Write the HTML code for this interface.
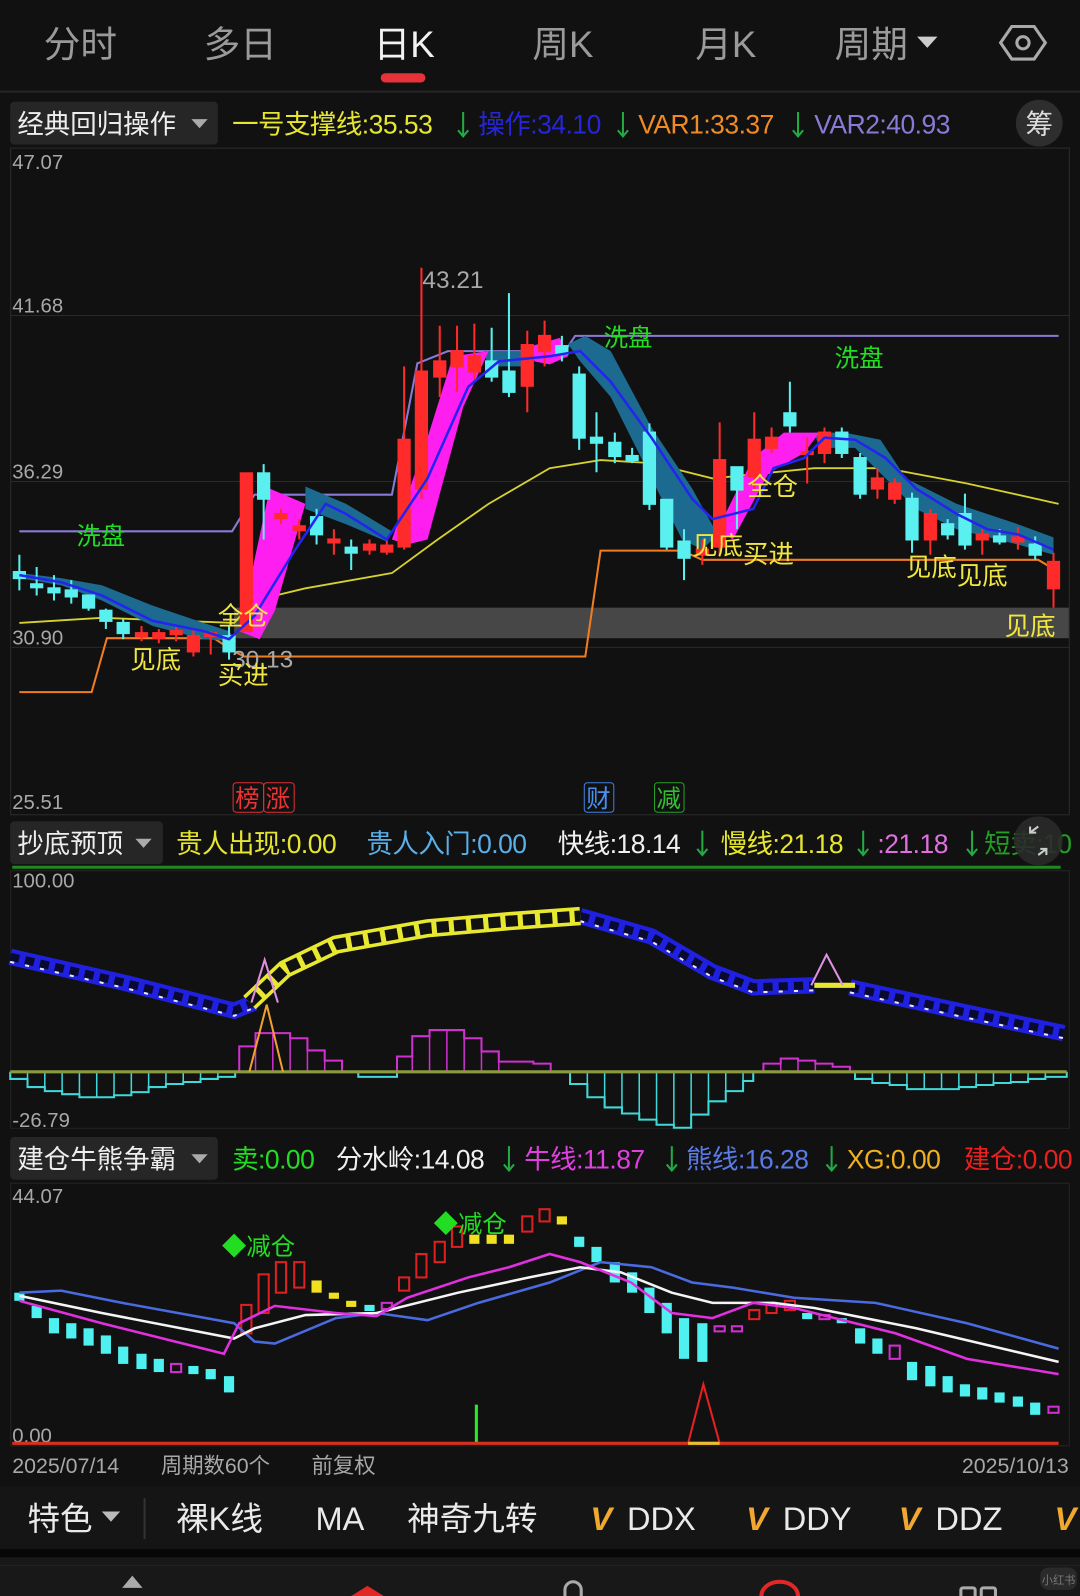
<!DOCTYPE html>
<html><head><meta charset="utf-8"><style>
html,body{margin:0;padding:0;background:#111;}
svg{display:block}
text{font-family:"Liberation Sans","Noto Sans CJK SC",sans-serif;}
</style></head><body>
<svg width="1080" height="1596" viewBox="0 0 1061 1568" xmlns="http://www.w3.org/2000/svg">
<rect width="1061" height="1568" fill="#111"/>
<g font-size="36" fill="#9a9a9a" text-anchor="middle">
<text x="79" y="56">分时</text><text x="236" y="56">多日</text>
<text x="397" y="56" fill="#f2f2f2">日K</text>
<text x="553" y="56">周K</text><text x="713" y="56">月K</text>
<text x="856" y="56">周期</text>
</g>
<path d="M901 36h20l-10 11z" fill="#ccc"/>
<rect x="374" y="72" width="44" height="9" rx="4.5" fill="#e8323a"/>
<path d="M994 26h22l11 16-11 16h-22l-11-16z" fill="none" stroke="#aaa" stroke-width="3"/>
<circle cx="1005" cy="42" r="6" fill="none" stroke="#aaa" stroke-width="3"/>
<line x1="0" y1="90" x2="1061" y2="90" stroke="#262626" stroke-width="2"/>
<rect x="10" y="100" width="204" height="42" rx="4" fill="#262626"/>
<text x="17" y="131" font-size="26" fill="#eee">经典回归操作</text>
<path d="M188 117h16l-8 9z" fill="#aaa"/>
<g font-size="26" letter-spacing="-0.5">
<text x="228" y="131" fill="#e6e630">一号支撑线:35.53</text>
<text x="470" y="131" fill="#2626d8">操作:34.10</text>
<text x="627" y="131" fill="#f08a24">VAR1:33.37</text>
<text x="800" y="131" fill="#8a7ad6">VAR2:40.93</text>
</g>
<g stroke="#22aa44" stroke-width="2" fill="none">
<path d="M455 110v24m-5-6l5 6 5-6"/><path d="M612 110v24m-5-6l5 6 5-6"/><path d="M784 110v24m-5-6l5 6 5-6"/>
</g>
<circle cx="1021" cy="121" r="23" fill="#2e2e2e"/>
<text x="1021" y="131" font-size="27" fill="#ddd" text-anchor="middle">筹</text>
<rect x="10.5" y="145.5" width="1040" height="655" fill="none" stroke="#2c2c2c"/>
<g stroke="#2a2a2a"><line x1="11" y1="310" x2="1050" y2="310"/><line x1="11" y1="473" x2="1050" y2="473"/><line x1="11" y1="636" x2="1050" y2="636"/></g>
<g font-size="20" fill="#a8a8a8">
<text x="12" y="166">47.07</text><text x="12" y="307">41.68</text><text x="12" y="470">36.29</text><text x="12" y="633">30.90</text><text x="12" y="795">25.51</text>
</g>
<rect x="230" y="597" width="820" height="30" fill="#474747"/>
<path d="M19 522H228L250 486H385L410 357L440 345H555L565 330H1040" fill="none" stroke="#8a7ad6" stroke-width="2"/>
<path d="M19 680H90L105 627H210L230 640L240 645H575L590 541H670L690 550H1020L1040 562" fill="none" stroke="#ef7d22" stroke-width="2"/>
<path d="M19 612L100 607L230 612L250 590L300 578L385 563L430 530L480 495L540 460L590 452L640 455L700 470L800 460L870 460L950 475L1040 495" fill="none" stroke="#d6d030" stroke-width="1.8"/>
<g fill="#1c6a90">
<path d="M19 563L60 568L100 575L150 595L200 612L225 620L232 630L200 628L150 615L100 590L60 575L19 568Z"/>
<path d="M300 478L340 495L385 522L380 532L340 515L300 500Z"/>
<path d="M475 345L520 345L525 360L480 360Z"/>
<path d="M558 338L575 330L600 345L640 420L680 480L705 525L690 540L670 530L640 470L600 390L570 355Z"/>
<path d="M800 425L830 425L865 432L890 470L940 495L1000 515L1035 528L1035 545L1000 535L940 520L900 500L870 470L840 440L805 440Z"/>
</g>
<g fill="#ff1ef0">
<path d="M235 620L265 480L300 495L270 600L255 628Z"/>
<path d="M385 530L420 430L445 350L480 345L455 400L420 530L400 535Z"/>
<path d="M522 340L550 332L558 350L540 358L525 355Z"/>
<path d="M705 520L740 450L770 425L805 425L790 445L755 465L720 530Z"/>
</g>
<g fill="#ff2a2a" stroke="#ff2a2a" stroke-width="2">
<path d="M139 615V630M156 618V632M173 616V630M190 618V645M207 620V643M242 465V620M276 500V515M294 510V530M328 520V545M363 530V545M380 530V545M397 360V540M414 263V490M432 320V390M449 320V385M466 318V375M518 325V405M535 315V360M690 530V555M707 415V545M741 405V480M758 420V445M793 430V475M810 420V455M862 460V490M879 470V495M914 500V545M965 520V545M1000 518V540M1035 543V597"/>
<rect x="133.5" y="622" width="11" height="3"/><rect x="150.5" y="622" width="11" height="5"/><rect x="167.5" y="620" width="11" height="3"/><rect x="184.5" y="625" width="11" height="15"/><rect x="201.5" y="622" width="11" height="3"/>
<rect x="236.5" y="465" width="11" height="155"/><rect x="270.5" y="505" width="11" height="4"/><rect x="288.5" y="517" width="11" height="4"/><rect x="322.5" y="530" width="11" height="3"/><rect x="357.5" y="535" width="11" height="5"/><rect x="374.5" y="536" width="11" height="6"/>
<rect x="391.5" y="432" width="11" height="105"/><rect x="408.5" y="365" width="11" height="115"/><rect x="426.5" y="355" width="11" height="15"/><rect x="443.5" y="345" width="11" height="15"/><rect x="460.5" y="350" width="11" height="15"/><rect x="512.5" y="339" width="11" height="40"/><rect x="529.5" y="330" width="11" height="15"/>
<rect x="684.5" y="540" width="11" height="5"/><rect x="701.5" y="452" width="11" height="85"/><rect x="735.5" y="432" width="11" height="36"/><rect x="752.5" y="430" width="11" height="10"/><rect x="787.5" y="444" width="11" height="2"/><rect x="804.5" y="425" width="11" height="20"/><rect x="856.5" y="470" width="11" height="10"/><rect x="873.5" y="475" width="11" height="15"/><rect x="908.5" y="505" width="11" height="25"/><rect x="959.5" y="525" width="11" height="5"/><rect x="994.5" y="528" width="11" height="4"/><rect x="1029.5" y="552" width="11" height="26"/>
</g>
<g fill="#5af0f0" stroke="#5af0f0" stroke-width="2">
<path d="M19 545V580M36 557V585M53 565V590M70 570V593M87 585V600M104 598V618M121 608V628M225 615V648M259 456V530M311 500V535M345 530V560M483 322V375M500 288V390M552 330V355M569 360V442M586 405V464M604 425V455M621 440V455M638 416V501M655 491V540M672 520V570M724 459V520M776 375V425M827 420V450M845 445V490M896 484V543M931 510V530M948 485V540M982 520V535M1017 527V550"/>
<rect x="13.5" y="562" width="11" height="6"/><rect x="30.5" y="574" width="11" height="3"/><rect x="47.5" y="578" width="11" height="4"/><rect x="64.5" y="580" width="11" height="6"/><rect x="81.5" y="585" width="11" height="12"/><rect x="98.5" y="600" width="11" height="10"/><rect x="115.5" y="612" width="11" height="10"/><rect x="219.5" y="625" width="11" height="15"/><rect x="253.5" y="465" width="11" height="25"/><rect x="305.5" y="508" width="11" height="17"/><rect x="339.5" y="538" width="11" height="5"/>
<rect x="477.5" y="355" width="11" height="15"/><rect x="494.5" y="365" width="11" height="20"/><rect x="546.5" y="340" width="11" height="8"/><rect x="563.5" y="368" width="11" height="62"/><rect x="580.5" y="430" width="11" height="5"/><rect x="598.5" y="435" width="11" height="13"/><rect x="615.5" y="448" width="11" height="4"/><rect x="632.5" y="425" width="11" height="70"/><rect x="649.5" y="491" width="11" height="46"/><rect x="666.5" y="532" width="11" height="16"/>
<rect x="718.5" y="459" width="11" height="22"/><rect x="770.5" y="406" width="11" height="12"/><rect x="821.5" y="425" width="11" height="20"/><rect x="839.5" y="450" width="11" height="35"/><rect x="890.5" y="490" width="11" height="40"/><rect x="925.5" y="515" width="11" height="10"/><rect x="942.5" y="505" width="11" height="30"/><rect x="976.5" y="527" width="11" height="5"/><rect x="1011.5" y="535" width="11" height="10"/>
</g>
<path d="M19 565L60 572L100 585L150 610L200 620L225 628L250 605L290 540L320 495L340 505L380 530L420 470L460 380L490 355L540 350L570 345L600 375L640 430L680 490L700 510L740 500L760 460L790 450L810 430L840 432L870 450L900 480L940 505L970 520L1000 525L1035 540" fill="none" stroke="#2424f0" stroke-width="2.5"/>
<g font-size="24" fill="#22dd22"><text x="75" y="535">洗盘</text><text x="593" y="340">洗盘</text><text x="820" y="360">洗盘</text></g>
<g font-size="24" fill="#a8a8a8"><text x="415" y="283">43.21</text><text x="228" y="656">30.13</text></g>
<g font-size="25" fill="#f0e640">
<text x="128" y="657">见底</text><text x="680" y="545">见底</text><text x="890" y="566">见底</text><text x="940" y="574">见底</text><text x="987" y="624">见底</text>
<text x="214" y="614">全仓</text><text x="734" y="487">全仓</text><text x="214" y="672">买进</text><text x="730" y="553">买进</text>
</g>
<g font-size="24">
<rect x="229" y="769" width="30" height="29" rx="3" fill="none" stroke="#e03030"/><rect x="259" y="769" width="30" height="29" rx="3" fill="none" stroke="#e03030"/>
<text x="231" y="793" fill="#ee3333">榜</text><text x="261" y="793" fill="#ee3333">涨</text>
<rect x="574" y="769" width="29" height="29" rx="3" fill="none" stroke="#4080e0"/><text x="576" y="793" fill="#4a90f0">财</text>
<rect x="643" y="769" width="29" height="29" rx="3" fill="none" stroke="#28a028"/><text x="645" y="793" fill="#30c030">减</text>
</g>
<rect x="10" y="807" width="150" height="42" rx="4" fill="#262626"/>
<text x="17" y="838" font-size="26" fill="#eee">抄底预顶</text>
<path d="M133 824h16l-8 9z" fill="#aaa"/>
<g font-size="26" letter-spacing="-0.5">
<text x="173" y="838" fill="#e6e630">贵人出现:0.00</text>
<text x="360" y="838" fill="#5ab0e8">贵人入门:0.00</text>
<text x="548" y="838" fill="#f0f0f0">快线:18.14</text>
<text x="708" y="838" fill="#e6e630">慢线:21.18</text>
<text x="862" y="838" fill="#e070e0">:21.18</text>
<text x="967" y="838" fill="#22a022">短卖:10</text>
</g>
<g stroke="#22aa44" stroke-width="2" fill="none">
<path d="M690 816v24m-5-6l5 6 5-6"/><path d="M848 816v24m-5-6l5 6 5-6"/><path d="M955 816v24m-5-6l5 6 5-6"/>
</g>
<circle cx="1020" cy="826" r="24" fill="#2a2a2a" opacity="0.9"/>
<path d="M1012 818l8-6m-8 0v6h6M1028 834l-8 6m8 0v-6h-6" stroke="#ccc" stroke-width="2" fill="none"/>
<line x1="12" y1="852" x2="1042" y2="852" stroke="#1e8a1e" stroke-width="3"/>
<rect x="10.5" y="855.5" width="1040" height="253" fill="none" stroke="#252525"/>
<g font-size="20" fill="#a8a8a8"><text x="12" y="872">100.00</text><text x="12" y="1107">-26.79</text></g>
<g fill="none" stroke="#d030d0" stroke-width="2">
<path d="M235 1053V1028H251V1015H268V1015H285V1020H302V1032H319V1042H336V1053"/>
<path d="M390 1053V1038H405V1018H422V1012H439V1012H456V1020H473V1033H490V1043H507V1043H524V1045H541V1053"/>
<path d="M750 1053V1045H767V1040H784V1042H801V1045H818V1048H835V1053"/>
</g>
<g fill="none" stroke="#40d8d8" stroke-width="2">
<path d="M10 1053V1060H27V1068H44V1072H61V1075H78V1078H95V1078H112V1076H129V1073H146V1068H163V1065H180V1063H197V1060H214V1058H231V1053"/>
<path d="M352 1053V1058H390V1053"/>
<path d="M560 1053V1065H577V1078H594V1088H611V1094H628V1100H645V1105H662V1108H679V1095H696V1082H713V1072H730V1062H740V1053"/>
<path d="M840 1053V1060H857V1064H874V1066H891V1070H908V1070H925V1070H942V1068H959V1066H976V1064H993V1063H1010V1060H1027V1058H1048V1053"/>
<path d="M27 1053V1068M44 1053V1072M61 1053V1075M78 1053V1078M95 1053V1078M112 1053V1076M129 1053V1073M146 1053V1068M163 1053V1065M180 1053V1063M197 1053V1060M214 1053V1058M577 1053V1078M594 1053V1088M611 1053V1094M628 1053V1100M645 1053V1105M662 1053V1108M679 1053V1095M696 1053V1082M713 1053V1072M730 1053V1062M857 1053V1064M874 1053V1066M891 1053V1070M908 1053V1070M925 1053V1070M942 1053V1068M959 1053V1066M976 1053V1064M993 1053V1063M1010 1053V1060M1027 1053V1058" stroke-width="1.5"/>
</g>
<g stroke="#d030d0" stroke-width="1.5" fill="none"><path d="M251 1053V1028M268 1053V1015M285 1053V1015M302 1053V1020M319 1053V1032M405 1053V1038M422 1053V1018M439 1053V1012M456 1053V1012M473 1053V1020M490 1053V1033M767 1053V1045M784 1053V1040M801 1053V1042"/></g>
<line x1="10" y1="1053" x2="1048" y2="1053" stroke="#8a9a40" stroke-width="3"/>
<!-- wavy chain band -->
<g fill="none">
<path d="M10 940L120 965L230 993L250 985M570 900L640 920L700 955L740 970L800 968M835 970L950 995L1045 1015" stroke="#2020e0" stroke-width="16"/>
<path d="M10 940L120 965L230 993L250 985M570 900L640 920L700 955L740 970L800 968M835 970L950 995L1045 1015" stroke="#0a0a30" stroke-width="8" stroke-dasharray="9 6"/>
<path d="M10 940L120 965L230 993L250 985M570 900L640 920L700 955L740 970L800 968M835 970L950 995L1045 1015" stroke="#e8e8ff" stroke-width="2" stroke-dasharray="4 11" transform="translate(0,5)"/>
<path d="M245 985L280 952L330 928L420 912L500 905L570 900" stroke="#e8e830" stroke-width="18"/>
<path d="M245 985L280 952L330 928L420 912L500 905L570 900" stroke="#111" stroke-width="11" stroke-dasharray="12 5"/>
</g>
<path d="M800 968H840" stroke="#e8e830" stroke-width="5"/>
<path d="M247 985L260 943L273 985M797 968L812 938L828 968" fill="none" stroke="#e090e0" stroke-width="2"/>
<path d="M245 1053L262 987L278 1053" fill="none" stroke="#f0a030" stroke-width="2"/>
<rect x="10" y="1117" width="204" height="42" rx="4" fill="#262626"/>
<text x="17" y="1148" font-size="26" fill="#eee">建仓牛熊争霸</text>
<path d="M188 1134h16l-8 9z" fill="#aaa"/>
<g font-size="26" letter-spacing="-0.5">
<text x="228" y="1148" fill="#22dd22">卖:0.00</text>
<text x="330" y="1148" fill="#f0f0f0">分水岭:14.08</text>
<text x="515" y="1148" fill="#e040e0">牛线:11.87</text>
<text x="674" y="1148" fill="#5a7ae6">熊线:16.28</text>
<text x="832" y="1148" fill="#f0b020">XG:0.00</text>
<text x="947" y="1148" fill="#e82020">建仓:0.00</text>
</g>
<g stroke="#22aa44" stroke-width="2" fill="none">
<path d="M500 1126v24m-5-6l5 6 5-6"/><path d="M660 1126v24m-5-6l5 6 5-6"/><path d="M817 1126v24m-5-6l5 6 5-6"/>
</g>
<rect x="10.5" y="1162.5" width="1040" height="258" fill="none" stroke="#252525"/>
<g font-size="20" fill="#a8a8a8"><text x="12" y="1182">44.07</text><text x="12" y="1417">0.00</text></g>
<g fill="#4ef0f0">
<rect x="14" y="1270" width="10" height="8"/><rect x="31" y="1283" width="10" height="12"/><rect x="48" y="1295" width="10" height="15"/><rect x="65" y="1300" width="10" height="15"/><rect x="82" y="1305" width="10" height="17"/><rect x="99" y="1312" width="10" height="18"/><rect x="116" y="1323" width="10" height="17"/><rect x="134" y="1330" width="10" height="15"/><rect x="151" y="1335" width="10" height="13"/><rect x="185" y="1342" width="10" height="8"/><rect x="202" y="1345" width="10" height="10"/><rect x="220" y="1352" width="10" height="16"/>
<rect x="358" y="1282" width="10" height="6"/><rect x="564" y="1215" width="10" height="10"/><rect x="581" y="1225" width="10" height="15"/><rect x="599" y="1240" width="10" height="20"/><rect x="616" y="1250" width="10" height="20"/><rect x="633" y="1265" width="10" height="25"/><rect x="650" y="1280" width="10" height="30"/><rect x="667" y="1295" width="10" height="40"/><rect x="685" y="1300" width="10" height="38"/>
<rect x="788" y="1290" width="10" height="6"/><rect x="822" y="1295" width="10" height="5"/><rect x="840" y="1305" width="10" height="15"/><rect x="857" y="1315" width="10" height="15"/><rect x="891" y="1338" width="10" height="18"/><rect x="909" y="1342" width="10" height="20"/><rect x="926" y="1352" width="10" height="16"/><rect x="943" y="1360" width="10" height="12"/><rect x="960" y="1363" width="10" height="12"/><rect x="977" y="1368" width="10" height="10"/><rect x="995" y="1372" width="10" height="10"/><rect x="1012" y="1378" width="10" height="12"/>
</g>
<g fill="#f0e020">
<rect x="306" y="1258" width="10" height="12"/><rect x="323" y="1270" width="10" height="6"/><rect x="340" y="1278" width="10" height="6"/><rect x="461" y="1213" width="10" height="9"/><rect x="478" y="1213" width="10" height="9"/><rect x="495" y="1213" width="10" height="9"/><rect x="547" y="1195" width="10" height="8"/>
</g>
<g fill="none" stroke="#e02020" stroke-width="2">
<rect x="237" y="1282" width="10" height="28"/><rect x="254" y="1252" width="10" height="38"/><rect x="271" y="1240" width="10" height="30"/><rect x="289" y="1240" width="10" height="25"/><rect x="392" y="1255" width="10" height="13"/><rect x="409" y="1232" width="10" height="23"/><rect x="427" y="1220" width="10" height="20"/><rect x="444" y="1205" width="10" height="20"/><rect x="513" y="1195" width="10" height="15"/><rect x="530" y="1188" width="10" height="12"/><rect x="736" y="1287" width="10" height="9"/><rect x="753" y="1280" width="10" height="10"/><rect x="771" y="1278" width="10" height="9"/>
</g>
<g fill="none" stroke="#d030d0" stroke-width="2">
<rect x="168" y="1340" width="10" height="8"/><rect x="375" y="1280" width="10" height="6"/><rect x="702" y="1303" width="10" height="5"/><rect x="719" y="1303" width="10" height="5"/><rect x="805" y="1292" width="10" height="4"/><rect x="874" y="1322" width="10" height="13"/><rect x="1030" y="1382" width="10" height="6"/>
</g>
<path d="M19 1270L60 1268L120 1280L230 1300L250 1318L270 1320L330 1295L370 1290L420 1297L470 1280L540 1260L590 1240L640 1245L680 1260L720 1265L780 1275L860 1280L950 1300L1040 1325" fill="none" stroke="#4a6ae0" stroke-width="2.5"/>
<path d="M19 1273L100 1290L230 1315L250 1305L300 1292L370 1290L450 1270L520 1255L570 1245L610 1250L660 1270L700 1280L760 1280L800 1285L900 1305L1040 1338" fill="none" stroke="#f4f4f4" stroke-width="2.5"/>
<path d="M19 1278L100 1300L220 1330L235 1300L270 1283L330 1290L370 1293L400 1275L460 1255L500 1245L540 1232L570 1240L620 1260L660 1290L700 1295L740 1280L780 1285L820 1295L880 1310L950 1335L1040 1350" fill="none" stroke="#e030e0" stroke-width="2.5"/>
<g font-size="24" fill="#22dd22"><text x="218" y="1233">◆减仓</text><text x="426" y="1211">◆减仓</text></g>
<line x1="468" y1="1380" x2="468" y2="1418" stroke="#22ee22" stroke-width="3"/>
<path d="M676 1418L691 1360L707 1418" fill="none" stroke="#e82020" stroke-width="2"/>
<line x1="12" y1="1418" x2="1040" y2="1418" stroke="#d83020" stroke-width="3"/>
<line x1="676" y1="1418" x2="707" y2="1418" stroke="#e8c030" stroke-width="3"/>
<g font-size="21" fill="#a8a8a8"><text x="12" y="1447">2025/07/14</text><text x="158" y="1447">周期数60个</text><text x="306" y="1447">前复权</text><text x="1050" y="1447" text-anchor="end">2025/10/13</text></g>
<rect x="0" y="1460" width="1061" height="62" fill="#151515"/>
<line x1="142" y1="1472" x2="142" y2="1512" stroke="#333" stroke-width="2"/>
<g font-size="32" fill="#eaeaea">
<text x="27" y="1503">特色</text><text x="173" y="1503">裸K线</text><text x="310" y="1503">MA</text><text x="400" y="1503">神奇九转</text>
<text x="616" y="1503">DDX</text><text x="769" y="1503">DDY</text><text x="919" y="1503">DDZ</text>
</g>
<path d="M100 1485h18l-9 10z" fill="#bbb"/>
<g font-size="32" fill="#f0a830" font-style="italic" font-weight="bold" font-family="Liberation Serif,serif"><text x="580" y="1503">V</text><text x="733" y="1503">V</text><text x="883" y="1503">V</text><text x="1036" y="1503">V</text></g>
<rect x="0" y="1522" width="1061" height="8" fill="#070707"/>
<rect x="0" y="1530" width="1061" height="38" fill="#181818"/>
<line x1="0" y1="1538" x2="1061" y2="1538" stroke="#222"/>
<path d="M120 1560l10-12 10 12z" fill="#aaa"/>
<path d="M345 1568l16-10 16 10z" fill="#e02828"/>
<path d="M555 1568v-6a8 8 0 0 1 16 0v6" fill="none" stroke="#aaa" stroke-width="3"/>
<path d="M748 1568a18 14 0 0 1 36 0" fill="none" stroke="#e02828" stroke-width="4"/>
<rect x="944" y="1560" width="14" height="10" rx="2" fill="none" stroke="#aaa" stroke-width="3"/><rect x="964" y="1560" width="14" height="10" rx="2" fill="none" stroke="#aaa" stroke-width="3"/>
<rect x="1022" y="1540" width="36" height="22" rx="8" fill="#2a2a2a"/>
<text x="1040" y="1556" font-size="11" fill="#777" text-anchor="middle">小红书</text>
</svg>
</body></html>
